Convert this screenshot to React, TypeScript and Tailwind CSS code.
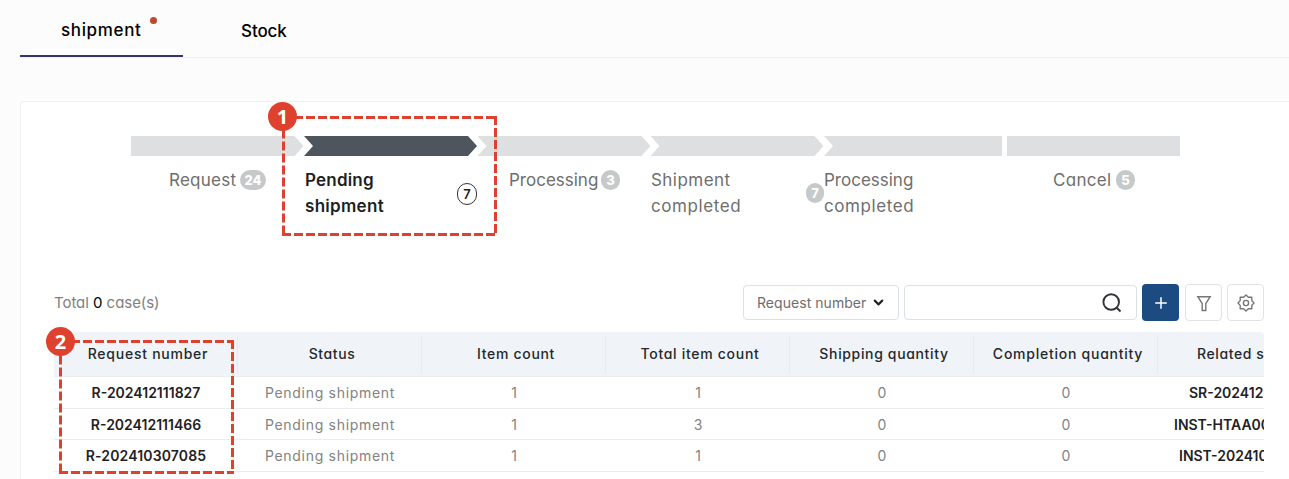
import { Plus, ChevronDown } from "lucide-react";

const ARROW_FIRST = "[clip-path:polygon(0_0,calc(100%_-_9px)_0,100%_50%,calc(100%_-_9px)_100%,0_100%)]";
const ARROW = "[clip-path:polygon(0_0,calc(100%_-_9px)_0,100%_50%,calc(100%_-_9px)_100%,0_100%,9px_50%)]";
const NOTCH = "[clip-path:polygon(0_0,100%_0,100%_100%,0_100%,9px_50%)]";

function Bar({ className }: { className: string }) {
  return <div className={`h-5 shrink-0 ${className}`} />;
}

function Count({ value, className }: { value: string; className: string }) {
  return (
    <span className={`flex h-5 shrink-0 items-center justify-center rounded-full bg-[#c6c9ca] text-[13px] font-extrabold text-white ${className}`}>
      {value}
    </span>
  );
}

function Callout({ n, className, badge, w, h }: { n: string; className: string; badge: string; w: number; h: number }) {
  return (
    <div className={`pointer-events-none absolute ${className}`}>
      <svg width={w} height={h} className="block" fill="none" stroke="#df412f" strokeWidth="3" strokeDasharray="9 3">
        <path d={`M1.5 ${h - 1.5}V1.5`} />
        <path d={`M0 1.5H${w}`} />
        <path d={`M${w - 1.5} 0V${h}`} />
        <path d={`M0 ${h - 1.5}H${w}`} />
      </svg>
      <span className={`absolute flex size-[29px] items-center justify-center rounded-full bg-[#df412f] font-['Noto_Sans',sans-serif] text-[20px] font-bold leading-none text-white ${badge}`}>
        {n}
      </span>
    </div>
  );
}

const headers = [
  { label: "Request number", track: "tracking-[0.75px]" },
  { label: "Status", track: "tracking-[0.6px]" },
  { label: "Item count", track: "tracking-[0.7px]" },
  { label: "Total item count", track: "tracking-[0.7px]" },
  { label: "Shipping quantity", track: "tracking-[0.65px]" },
  { label: "Completion quantity", track: "tracking-[0.75px]" },
];

const rows = [
  { id: "R-202412111827", track: "tracking-[0px]", total: "1", related: "SR-202412", pad: "pl-[31px]" },
  { id: "R-202412111466", track: "tracking-[0px]", total: "3", related: "INST-HTAA00", pad: "pl-[16px]" },
  { id: "R-202410307085", track: "tracking-[0.15px]", total: "1", related: "INST-202410", pad: "pl-[21px]" },
];

const COLS = "grid grid-cols-[184px_184px_184px_184px_184px_184px_200px]";

export default function App() {
  return (
    <div className="relative h-[479px] w-full overflow-hidden bg-[#fcfcfc] pl-5 font-['Inter',sans-serif] text-[#6e6e6e] [font-feature-settings:'cv11']">
      <nav className="flex h-[58px] border-b border-[#efefef] text-[17px] font-medium text-black">
        <div className="relative h-[57px] w-[163px] border-b-2 border-[#34356c] pl-[41px] pt-[17px] leading-[26px]">
          <span className="tracking-[0.65px]">shipment</span>
          <span className="absolute left-[130px] top-[17px] size-[7px] rounded-full bg-[#c0472f]" />
        </div>
        <div className="pl-[58px] pt-[18px] leading-[26px] tracking-[-0.1px]">Stock</div>
      </nav>

      <main className="mt-[43px] h-[400px] rounded-tl-sm border-l border-t border-[#f1f1f1] bg-white">
        <div className="flex pl-[109.5px] pt-[34px]">
          <Bar className={`w-[173px] bg-[#dedfe1] ${ARROW_FIRST}`} />
          <Bar className={`ml-[0.5px] w-[173px] bg-[#4e555d] ${ARROW}`} />
          <Bar className={`ml-[0.5px] w-[173px] bg-[#dedfe1] ${ARROW}`} />
          <Bar className={`w-[173px] bg-[#dedfe1] ${ARROW}`} />
          <Bar className={`ml-[0.5px] w-[178px] bg-[#dedfe1] ${NOTCH}`} />
          <Bar className="ml-[5px] w-[173px] bg-[#dedfe1]" />
        </div>

        <div className="mt-[11px] flex h-[52px] pl-[110px] text-[17px] leading-[26px]">
          <div className="flex w-[174px] pl-[38px]">
            <span className="w-[71px] tracking-[0.25px]">Request</span>
            <Count value="24" className="mt-[3px] w-[26px]" />
          </div>
          <div className="flex w-[172px] items-center justify-between font-semibold text-[#1d1f24]">
            <span className="w-[90px] leading-[26px]">
              <span className="block tracking-[0.2px]">Pending</span>
              <span className="block tracking-[0.3px]">shipment</span>
            </span>
            <span className="mt-0.5 flex h-[22px] w-5 items-center justify-center rounded-full border border-[#333] text-[13px]">7</span>
          </div>
          <div className="flex w-[174px] pl-[32px]">
            <span className="w-[92px]">Processing</span>
            <Count value="3" className="mt-[3px] w-[19px]" />
          </div>
          <div className="flex w-[173px] items-center justify-between">
            <span className="w-[95px]">
              <span className="block tracking-[0.45px]">Shipment</span>
              <span className="block tracking-[0.6px]">completed</span>
            </span>
            <Count value="7" className="w-[18px]" />
          </div>
          <div className="w-[183px]">
            <span className="block">Processing</span>
            <span className="block tracking-[0.6px]">completed</span>
          </div>
          <div className="flex pl-[46px]">
            <span className="w-[63px] tracking-[0.3px]">Cancel</span>
            <Count value="5" className="mt-[3px] w-[19px]" />
          </div>
        </div>

        <div className="mt-[65px] flex h-[37px] items-center pl-[33px] pr-[25px]">
          <p className="pt-0.5 text-[15px] tracking-[-0.05px] text-[#808080]">
            Total <span className="text-black">0</span> case(s)
          </p>
          <div className="ml-auto flex items-center">
            <button className="flex h-[35px] w-[156px] items-center rounded-sm border border-[#dbe0e6] pl-[13px] text-[14px] tracking-[0.05px]">
              <span className="w-[114px] text-left">Request number</span>
              <ChevronDown size={15} strokeWidth={3.4} className="text-[#22252a]" />
            </button>
            <div className="ml-[5px] flex h-[35px] w-[233px] items-center justify-end rounded-sm border border-[#dbe0e6] pr-[13px]">
              <svg width="22" height="22" viewBox="0 0 22 22" fill="none" stroke="#303236" strokeWidth="1.9">
                <circle cx="10.2" cy="10" r="7.8" />
                <path d="M15.5 15.5l4 4" />
              </svg>
            </div>
            <button className="ml-[5px] flex h-[37px] w-[37px] items-center justify-center rounded-sm bg-[#1c4b82] text-white">
              <Plus size={18} strokeWidth={2} />
            </button>
            <button className="ml-[6px] flex h-[37px] w-[37px] items-center justify-center rounded-sm border border-[#e2e2e2]">
              <svg width="16" height="18" viewBox="0 0 16 18" fill="none" stroke="#777" strokeWidth="1.4">
                <path d="M1.8 2.7h12.4L9.8 9.5v7H6.2v-7Z" />
              </svg>
            </button>
            <button className="ml-[5px] flex h-[37px] w-[37px] items-center justify-center rounded-sm border border-[#e2e2e2]">
              <svg width="18" height="18" viewBox="0 0 18 18" fill="none" stroke="#777" strokeWidth="1.4" strokeLinejoin="round">
                <path d="M9 1l2.4 2.2h3.4v3.4L17 9l-2.2 2.4v3.4h-3.4L9 17l-2.4-2.2H3.2v-3.4L1 9l2.2-2.4V3.2h3.4Z" />
                <circle cx="9" cy="9" r="2.6" />
              </svg>
            </button>
          </div>
        </div>

        <div className="ml-[33px] mt-[11px] w-[1210px] overflow-hidden rounded-t-[4px] text-[14px]">
          <div className={`${COLS} h-[45px] w-[1304px] border-b border-[#ebedef] bg-[#f0f4f8] pt-[3px] font-medium text-[#25282c]`}>
            {headers.map((h) => (
              <div key={h.label} className="flex h-[39px] items-center justify-center border-r border-[#e4ebf1] pb-[3px] pl-[5px]">
                <span className={`whitespace-nowrap ${h.track}`}>{h.label}</span>
              </div>
            ))}
            <div className="flex h-[39px] items-center whitespace-nowrap pb-[3px] pl-[39px] tracking-[0.6px]">Related s</div>
          </div>
          {rows.map((r) => (
            <div key={r.id} className={`${COLS} h-[31.7px] w-[1304px] items-center border-b border-[#ececec] text-center text-[#828282]`}>
              <span className={`font-semibold text-[#1f2125] ${r.track}`}>{r.id}</span>
              <span className="tracking-[0.7px]">Pending shipment</span>
              <span>1</span>
              <span>{r.total}</span>
              <span>0</span>
              <span>0</span>
              <span className={`whitespace-nowrap text-left font-semibold text-[#1f2125] ${r.pad}`}>{r.related}</span>
            </div>
          ))}
        </div>
      </main>

      <Callout n="1" w={215} h={120} className="left-[282px] top-[116px]" badge="-left-[14px] -top-[14px]" />
      <Callout n="2" w={175} h={134} className="left-[59px] top-[340px]" badge="-left-[13px] -top-[13px]" />
    </div>
  );
}
